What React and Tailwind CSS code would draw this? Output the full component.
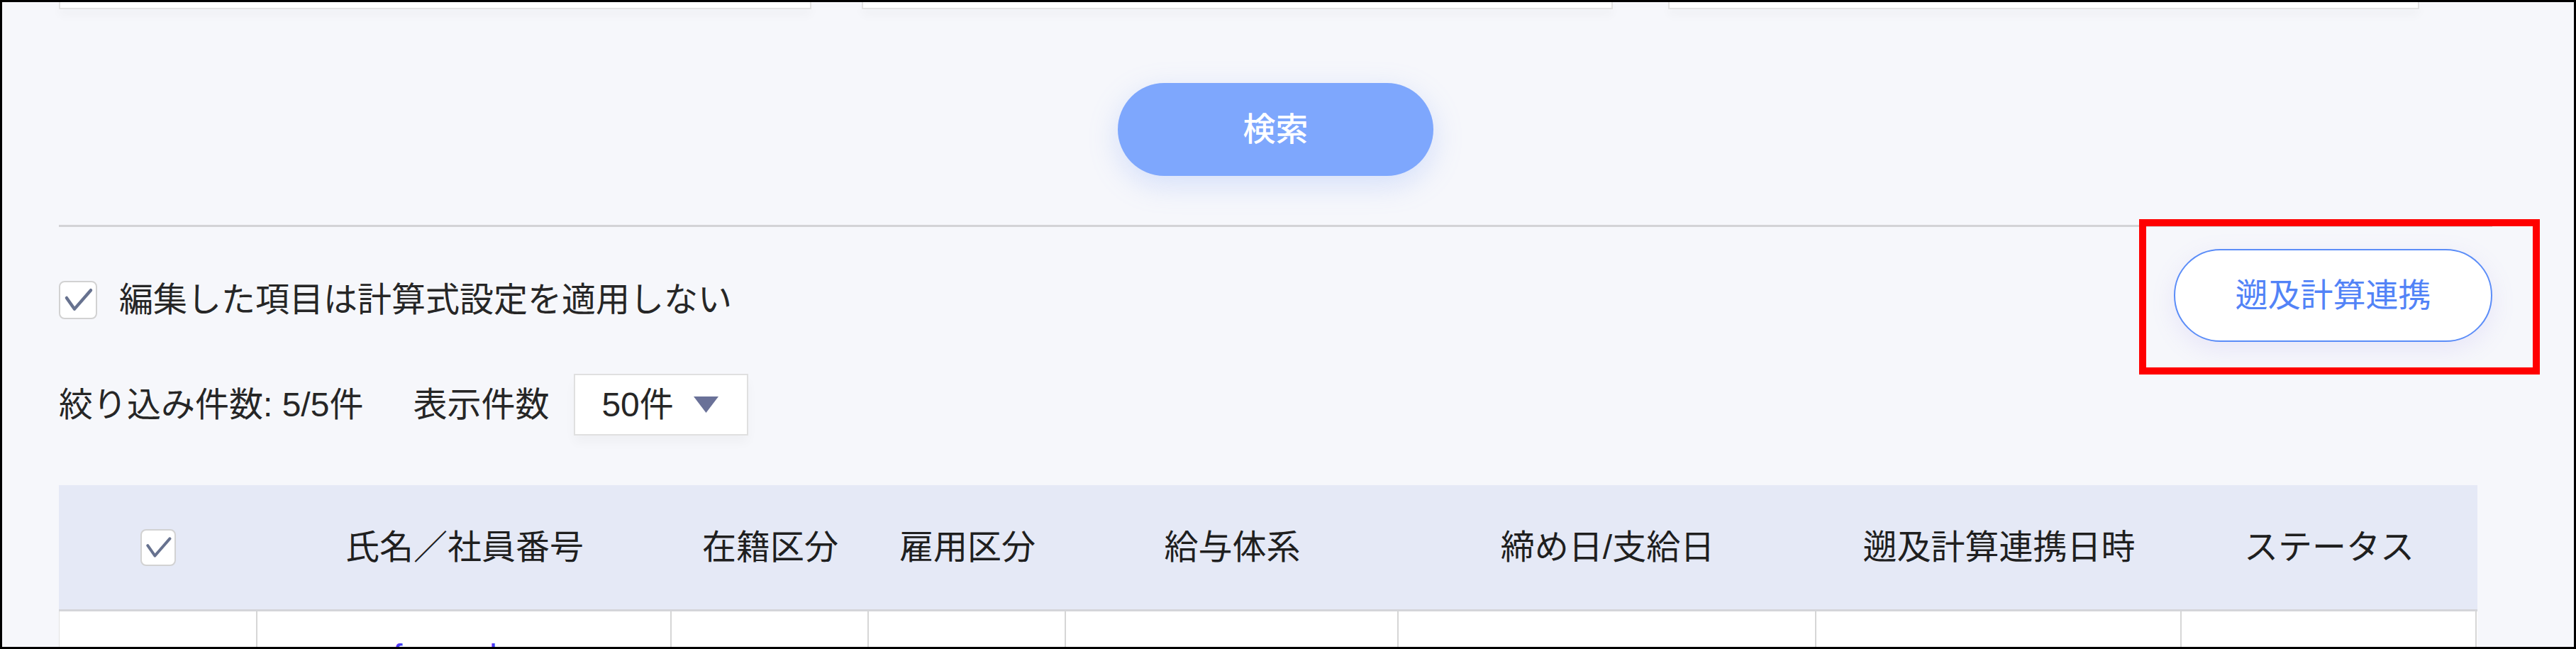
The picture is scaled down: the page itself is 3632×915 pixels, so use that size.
import React from "react";

function Check({ className }) {
  return (
    <svg viewBox="0 0 24 24" className={className} fill="none">
      <path d="M3.6 10.4 L9.4 18.6 L21.4 4.8" stroke="#67728f" strokeWidth="2.3" strokeLinecap="round" strokeLinejoin="round" />
    </svg>
  );
}

const cols = [
  { w: "w-[280px]", label: null },
  { w: "w-[584px]", label: "氏名／社員番号" },
  { w: "w-[278px]", label: "在籍区分" },
  { w: "w-[278px]", label: "雇用区分" },
  { w: "w-[469px]", label: "給与体系" },
  { w: "w-[589px]", label: "締め日/支給日" },
  { w: "w-[515px]", label: "遡及計算連携日時" },
  { w: "w-[416px]", label: "ステータス" },
];

export default function App() {
  return (
    <div className="relative w-[3632px] h-[915px] overflow-hidden border-[3px] border-black bg-[#f6f7fb] font-['Liberation_Sans','Noto_Sans_CJK_JP',sans-serif] text-[#262626]">
      <div className="ml-[80px] w-[3431px] flex flex-col">
        {/* top inputs (cut off) */}
        <div className="flex">
          <div className="w-[1061px] h-[10px] bg-white border-x-2 border-b-2 border-[#e2e2e2] shadow-[0_8px_14px_rgba(0,0,0,0.035)]" />
          <div className="ml-[71px] w-[1059px] h-[10px] bg-white border-x-2 border-b-2 border-[#e2e2e2] shadow-[0_8px_14px_rgba(0,0,0,0.035)]" />
          <div className="ml-[78px] w-[1059px] h-[10px] bg-white border-x-2 border-b-2 border-[#e2e2e2] shadow-[0_8px_14px_rgba(0,0,0,0.035)]" />
        </div>

        {/* search button */}
        <button className="mt-[104px] mx-auto w-[445px] h-[131px] rounded-full bg-[#7ea7fd] text-white text-[46px] font-medium flex items-center justify-center shadow-[0_12px_40px_rgba(126,160,250,0.28)]">
          検索
        </button>

        {/* divider */}
        <div className="mt-[69px] h-[3px] bg-[#d3d3d6]" />

        {/* checkbox row + 遡及計算連携 */}
        <div className="pt-[31px] flex justify-between items-start">
          <div className="mt-[45px] flex items-center gap-[31px]">
            <div className="w-[54px] h-[54px] rounded-[8px] border-2 border-[#d2d2d2] bg-white flex items-center justify-center">
              <Check className="w-[46px] h-[46px]" />
            </div>
            <span className="text-[48px] leading-none">編集した項目は計算式設定を適用しない</span>
          </div>
          <button className="w-[449px] h-[131px] rounded-full bg-white border-2 border-[#5b8df8] text-[#5283f7] text-[46px] flex items-center justify-center shadow-[0_10px_34px_rgba(150,130,235,0.14)]">
            遡及計算連携
          </button>
        </div>

        {/* filter row */}
        <div className="mt-[45px] h-[87px] flex items-center">
          <span className="text-[48px] leading-none">絞り込み件数: 5/5件</span>
          <span className="ml-[70px] text-[48px] leading-none">表示件数</span>
          <div className="ml-[35px] w-[246px] h-[87px] bg-white border-2 border-[#e0e0e0] flex items-center pl-[37px] shadow-[0_10px_14px_rgba(0,0,0,0.03)]">
            <span className="text-[48px] leading-none">50件</span>
            <svg viewBox="0 0 35 23" className="ml-[28px] w-[35px] h-[23px]">
              <polygon points="0,0 35,0 17.5,23" fill="#6a7198" />
            </svg>
          </div>
        </div>

        {/* table */}
        <div className="mt-[70px] w-[3410px]">
          <div className="flex h-[178px] bg-[#e5e9f6] border-b-[3px] border-[#d4d5d9]">
            {cols.map((c, i) => (
              <div key={i} className={`${c.w} flex items-center justify-center`}>
                {c.label ? (
                  <span className="text-[48px] leading-none text-[#1f1f1f]">{c.label}</span>
                ) : (
                  <div className="w-[50px] h-[52px] rounded-[8px] border-2 border-[#d2d2d2] bg-white flex items-center justify-center">
                    <Check className="w-[42px] h-[42px]" />
                  </div>
                )}
              </div>
            ))}
          </div>
          <div className="flex h-[120px] bg-white">
            {cols.map((c, i) => (
              <div
                key={i}
                className={`${c.w} h-full border-r-2 border-[#d6d6d6] ${i === 0 ? "border-l border-l-[#e2e2e2]" : ""}`}
              >
                {i === 1 ? (
                  <div className="pt-[40px] pl-[191px] text-[48px] leading-none text-[#4a3af5] whitespace-nowrap">freee_hanae</div>
                ) : null}
              </div>
            ))}
          </div>
        </div>
      </div>

      {/* red annotation frame */}
      <div className="absolute left-[3013px] top-[306px] w-[565px] h-[219px] border-[10px] border-[#ff0000]" />
    </div>
  );
}
